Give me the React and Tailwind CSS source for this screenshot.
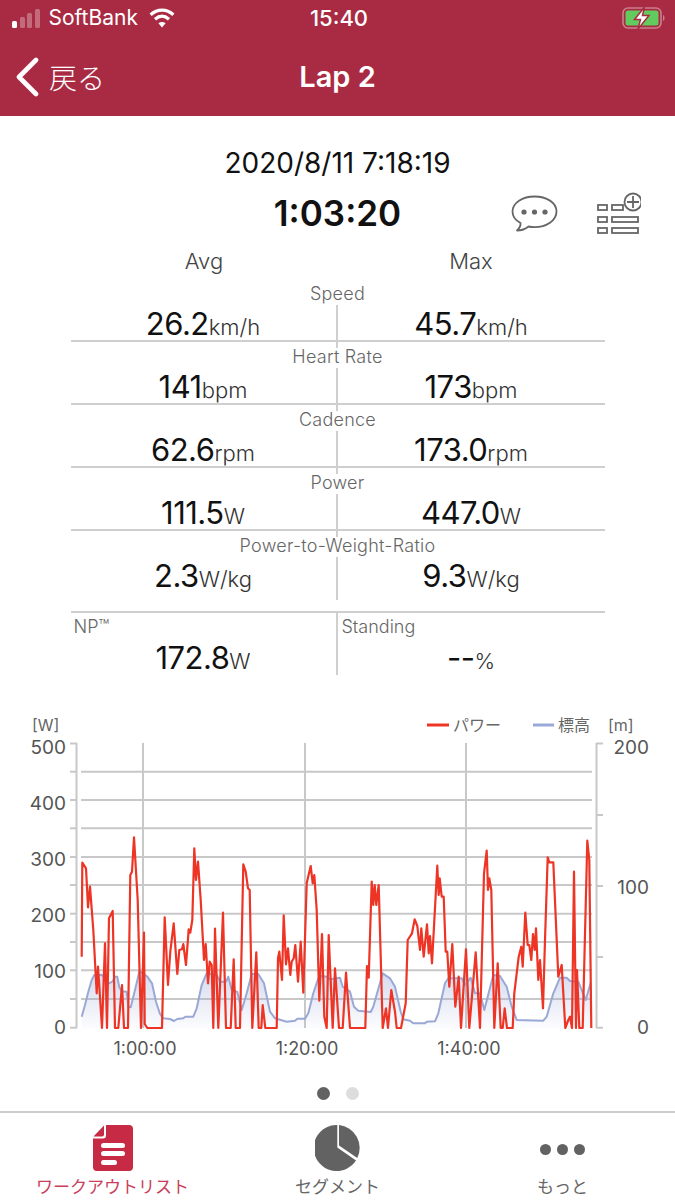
import React from 'react'

const CJK = '"Inter","Noto Sans CJK JP",sans-serif'

// traces are read off in 3x coordinates, left half starts at x=60, right half at x=330
const powerA = [[65,380],[67,98],[78,115],[84,232],[90,170],[100,300],[110,490],[114,410],[126,594],[135,340],[141,594],[147,265],[158,243],[165,594],[175,594],[186,465],[192,594],[204,594],[211,135],[216,125],[222,22],[233,210],[243,594],[252,308],[254,582],[262,594],[306,594],[314,262],[324,465],[331,365],[341,280],[352,432],[358,360],[366,358],[370,342],[378,405],[386,298],[391,308],[397,270],[403,55],[408,150],[414,95],[422,210],[432,390],[437,342],[444,460],[449,395],[455,405],[460,594],[465,296],[475,594],[489,248],[498,594],[512,594],[521,388],[527,594],[540,594],[550,103],[557,125],[564,175],[569,180],[577,594],[589,367],[596,594],[604,594],[608,525],[616,594],[650,594],[654,385],[658,365],[666,450],[671,256],[678,403],[684,355],[691,435],[695,395],[701,385],[706,345],[714,455],[722,335],[730,488],[740,160],[752,108],[758,160],[763,135],[770,240],[778,512],[786,312],[793,560],[800,594],[806,315],[818,594]]
const powerB = [[15,415],[27,594],[38,594],[48,428],[60,594],[106,594],[111,408],[116,443],[125,155],[130,225],[134,165],[139,225],[146,165],[158,594],[168,535],[174,594],[184,480],[195,545],[200,594],[213,594],[227,520],[233,330],[246,310],[254,268],[262,288],[270,360],[274,295],[281,380],[291,283],[296,370],[300,318],[306,400],[322,107],[326,195],[329,145],[335,200],[341,200],[347,365],[352,365],[358,470],[367,342],[376,530],[386,440],[393,594],[408,358],[418,594],[437,367],[450,594],[462,130],[470,62],[474,180],[478,145],[484,180],[493,594],[503,400],[512,594],[518,594],[524,535],[531,594],[548,594],[553,490],[566,380],[574,350],[578,410],[586,248],[593,345],[598,345],[604,390],[609,312],[614,360],[618,295],[625,450],[630,390],[639,535],[645,330],[653,82],[658,97],[670,97],[685,440],[695,405],[706,594],[715,570],[720,560],[726,594],[732,125],[738,594],[741,420],[748,594],[758,594],[772,32],[778,90],[784,594]]
const elevA = [[65,560],[75,525],[85,485],[95,450],[103,435],[125,434],[135,445],[147,460],[157,455],[165,440],[172,440],[178,472],[185,484],[200,485],[205,530],[212,532],[225,480],[238,425],[250,430],[262,440],[276,460],[288,515],[300,552],[310,565],[330,567],[342,573],[352,567],[370,565],[376,560],[400,560],[410,535],[425,465],[440,430],[470,435],[480,455],[498,455],[505,440],[515,480],[532,486],[545,540],[560,490],[575,432],[595,432],[612,460],[630,545],[645,565],[680,575],[705,572],[712,566],[735,566],[745,550],[760,490],[775,445],[785,438],[800,440]]
const elevB = [[0,448],[30,443],[38,470],[60,485],[72,530],[85,542],[122,546],[130,530],[158,430],[180,445],[195,470],[212,545],[220,568],[240,572],[250,580],[285,580],[290,575],[315,574],[325,550],[345,460],[355,445],[395,445],[405,465],[422,443],[435,490],[450,490],[463,540],[490,435],[510,438],[530,470],[545,530],[560,570],[640,572],[650,560],[670,490],[690,443],[710,443],[720,453],[745,455],[767,510],[782,458]]

const toPage = (pts, startX) => pts.map(([x, y]) => [+(startX + x / 3).toFixed(1), +(y / 3 + 130).toFixed(1)])
const power = [...toPage(powerA, 60), ...toPage(powerB, 330)]
const elev = [...toPage(elevA, 60), ...toPage(elevB, 330)]
const line = (pts) => pts.map((p) => p.join(',')).join(' ')

const rows = [
  { label: 'Speed', avg: '26.2', max: '45.7', unit: 'km/h' },
  { label: 'Heart Rate', avg: '141', max: '173', unit: 'bpm' },
  { label: 'Cadence', avg: '62.6', max: '173.0', unit: 'rpm' },
  { label: 'Power', avg: '111.5', max: '447.0', unit: 'W' },
]

function Value({ num, unit }) {
  return (
    <span className="text-[#111] whitespace-nowrap">
      <span className="text-[31px] tracking-[-0.5px]">{num}</span>
      <span className="text-[22px] font-light text-[#333]">{unit}</span>
    </span>
  )
}

function StatRow({ label, avg, max, unit, tall }) {
  return (
    <div className={`border-b-2 border-[#cfcfcf] ${tall ? 'h-[82px]' : 'h-[63px]'}`}>
      <div className="h-[26px] pt-[2px] leading-[26px] text-center text-[18px] tracking-[0.25px] font-light text-[#666]">{label}</div>
      <div className="grid grid-cols-2 h-[35px]">
        <div className="flex items-end justify-center border-r-2 border-[#cfcfcf] leading-[38px]">
          <Value num={avg} unit={unit} />
        </div>
        <div className="flex items-end justify-center leading-[38px]">
          <Value num={max} unit={unit} />
        </div>
      </div>
    </div>
  )
}

function StatusBar() {
  return (
    <div className="h-[36px] flex items-center justify-between pl-[12px] pr-[9px] text-white">
      <div className="flex items-center flex-1">
        <div className="flex items-end gap-[2.5px] h-[19px]">
          <span className="w-[5px] h-[7px] rounded-[1.5px] bg-white" />
          <span className="w-[5px] h-[11px] rounded-[1.5px] bg-white/30" />
          <span className="w-[5px] h-[15px] rounded-[1.5px] bg-white/30" />
          <span className="w-[5px] h-[19px] rounded-[1.5px] bg-white/30" />
        </div>
        <span className="ml-[9px] text-[21px]">SoftBank</span>
        <svg className="ml-[11px]" width="26" height="20" viewBox="0 0 26 20" fill="none" stroke="#fff" strokeWidth="3.2">
          <path d="M1.6 6.8C8.5 .6 17.5 .6 24.4 6.8" />
          <path d="M6 11.2c4.4-3.8 9.6-3.8 14 0" />
          <path d="M13 19.5l-3.6-4.2c2.2-1.6 5-1.6 7.2 0z" fill="#fff" stroke="none" />
        </svg>
      </div>
      <span className="text-[22px] font-medium">15:40</span>
      <div className="flex-1 flex justify-end">
        <svg width="44" height="22" viewBox="0 0 44 22">
          <rect x="1" y="1" width="38" height="20" rx="5" fill="none" stroke="#fff" strokeOpacity=".4" strokeWidth="1.6" />
          <rect x="3.5" y="3.5" width="33" height="15" rx="2.5" fill="#62cb5e" />
          <path d="M41 8c2 .5 2 5.500 0 6z" fill="#fff" fillOpacity=".4" />
          <path d="M22.500 0L12.500 12.500h6L16 22l11-13.500h-6.500z" fill="#fff" stroke="#a92b43" strokeWidth="1.500" />
        </svg>
      </div>
    </div>
  )
}

function NavBar() {
  return (
    <div className="h-[80px] grid grid-cols-[1fr_auto_1fr] items-center pt-[2px]">
      <div className="flex items-center pl-[16px] text-white">
        <svg width="23" height="40" viewBox="0 0 23 40" fill="none" stroke="#fff" strokeWidth="4.600" strokeLinecap="round" strokeLinejoin="round">
          <path d="M20 3L3 20l17 17" />
        </svg>
        <span className="ml-[10px] text-[28px] font-light leading-none" style={{ fontFamily: '"Noto Sans CJK JP",sans-serif' }}>戻る</span>
      </div>
      <span className="text-white text-[29px] font-semibold">Lap 2</span>
      <div />
    </div>
  )
}

function BubbleIcon() {
  return (
    <svg width="47" height="38" viewBox="0 0 47 38" fill="none">
      <path d="M23.500 1.500C11.500 1.500 1.500 8 1.500 16.500c0 5 3.300 9 8 11.500 .4 3-1.300 5.500-3.500 7.500 4.500 0 8.500-1.500 11.500-4 2 .4 4 .6 6 .6 12 0 22-6.600 22-15.600S35.500 1.500 23.500 1.500z" stroke="#666" strokeWidth="1.800" strokeLinejoin="round" />
      <circle cx="13" cy="17" r="2.600" fill="#666" />
      <circle cx="23.500" cy="17" r="2.600" fill="#666" />
      <circle cx="34" cy="17" r="2.600" fill="#666" />
    </svg>
  )
}

function ListPlusIcon() {
  return (
    <svg width="44" height="42" viewBox="0 0 44 42" fill="none" stroke="#666" strokeWidth="1.800">
      <rect x="1" y="13" width="9" height="5" />
      <rect x="15" y="13" width="11" height="5" />
      <rect x="1" y="25" width="9" height="5" />
      <rect x="15" y="25" width="26" height="5" />
      <rect x="1" y="36" width="9" height="5" />
      <rect x="15" y="36" width="26" height="5" />
      <circle cx="36" cy="10" r="8.500" fill="#fff" />
      <path d="M36 4v12M30 10h12" />
    </svg>
  )
}

function PowerChart() {
  const grid = '#c8c8c8'
  const axisText = { fill: '#555', fontSize: 19, fontFamily: CJK }
  const small = { fill: '#666', fontSize: 16, fontFamily: CJK }
  // svg y = page y - 700
  const hLines = [71.700, 100, 128.300, 157, 185, 213.700, 242, 270.300, 299]
  return (
    <svg width="675" height="375" viewBox="0 0 675 375" className="block">
      <defs>
        <linearGradient id="elevFill" x1="0" y1="0" x2="0" y2="1">
          <stop offset="0" stopColor="#9aa8d6" stopOpacity=".42" />
          <stop offset="1" stopColor="#9aa8d6" stopOpacity=".03" />
        </linearGradient>
      </defs>

      <text x="32" y="31" {...small}>[W]</text>
      <line x1="427" x2="449" y1="25" y2="25" stroke="#ee3424" strokeWidth="3" />
      <text x="453" y="31" {...small}>パワー</text>
      <line x1="533" x2="554" y1="25" y2="25" stroke="#9aa8d6" strokeWidth="3" />
      <text x="558" y="31" {...small}>標高</text>
      <text x="608" y="31" {...small}>[m]</text>

      {hLines.map((y) => <line key={y} x1="81" x2="592" y1={y} y2={y} stroke={grid} strokeWidth="2" />)}
      {[143, 305, 466].map((x) => <line key={x} x1={x} x2={x} y1="43" y2="328" stroke={grid} strokeWidth="2" />)}

      {/* left axis */}
      <line x1="76.500" x2="76.500" y1="43" y2="328" stroke={grid} strokeWidth="2" />
      {[43.500, 71.700, 100, 128.300, 157, 185, 213.700, 242, 270.300, 299, 327.700].map((y) => (
        <line key={y} x1="70" x2="77" y1={y} y2={y} stroke={grid} strokeWidth="2" />
      ))}
      {[['500', 47], ['400', 103], ['300', 159], ['200', 215], ['100', 271], ['0', 327]].map(([t, y]) => (
        <text key={t} x="66" y={y + 7} textAnchor="end" {...axisText}>{t}</text>
      ))}

      {/* right axis */}
      <line x1="596.500" x2="596.500" y1="43" y2="328" stroke={grid} strokeWidth="2" />
      {[43.500, 115, 186, 257, 327.700].map((y) => (
        <line key={y} x1="596" x2="603" y1={y} y2={y} stroke={grid} strokeWidth="2" />
      ))}
      {[['200', 47], ['100', 187], ['0', 327]].map(([t, y]) => (
        <text key={t} x="649" y={y + 7} textAnchor="end" {...axisText}>{t}</text>
      ))}

      <polygon points={`81.700,328 ${line(elev)} 591,328`} fill="url(#elevFill)" />
      <polyline points={line(elev)} fill="none" stroke="#9aa8d6" strokeWidth="2" strokeLinejoin="round" />
      <polyline points={line(power)} fill="none" stroke="#ee3424" strokeWidth="2.200" strokeLinejoin="round" />

      {[['1:00:00', 145], ['1:20:00', 307], ['1:40:00', 469]].map(([t, x]) => (
        <text key={t} x={x} y="355" textAnchor="middle" fill="#555" fontSize="18" fontFamily={CJK}>{t}</text>
      ))}
    </svg>
  )
}

function TabBar() {
  return (
    <div className="h-[88px] grid grid-cols-3 border-t-2 border-[#cccccc]">
      <div className="flex flex-col items-center pt-[12px]">
        <svg width="40" height="46" viewBox="0 0 40 46">
          <path d="M13 0h23a4 4 0 0 1 4 4v38a4 4 0 0 1-4 4H4a4 4 0 0 1-4-4V13.500h10a3 3 0 0 0 3-3z" fill="#c62a44" />
          <path d="M11 .5v9a2 2 0 0 1-2 2H.5z" fill="#c62a44" />
          <rect x="8" y="18" width="24" height="5" rx="2.500" fill="#fff" />
          <rect x="8" y="26" width="24" height="5" rx="2.500" fill="#fff" />
          <rect x="8" y="35" width="16" height="5" rx="2.500" fill="#fff" />
        </svg>
        <span className="mt-[3px] text-[17px] leading-[24px] text-[#c8405a]" style={{ fontFamily: '"Noto Sans CJK JP",sans-serif' }}>ワークアウトリスト</span>
      </div>
      <div className="flex flex-col items-center pt-[12px]">
        <svg width="46" height="46" viewBox="0 0 46 46">
          <path d="M22.300 0A23 23 0 1 0 41 35.500L22.300 22.500z" fill="#626262" />
          <path d="M24 0A23 23 0 0 1 42.300 33L24 20.500z" fill="#626262" />
        </svg>
        <span className="mt-[3px] text-[17px] leading-[24px] text-[#666]" style={{ fontFamily: '"Noto Sans CJK JP",sans-serif' }}>セグメント</span>
      </div>
      <div className="flex flex-col items-center pt-[12px]">
        <div className="h-[46px] flex items-center gap-[6px] pt-[2px]">
          <span className="w-[11px] h-[11px] rounded-full bg-[#626262]" />
          <span className="w-[11px] h-[11px] rounded-full bg-[#626262]" />
          <span className="w-[11px] h-[11px] rounded-full bg-[#626262]" />
        </div>
        <span className="mt-[3px] text-[17px] leading-[24px] text-[#666]" style={{ fontFamily: '"Noto Sans CJK JP",sans-serif' }}>もっと</span>
      </div>
    </div>
  )
}

export default function App() {
  return (
    <div className="w-[675px] h-[1200px] bg-white overflow-hidden flex flex-col" style={{ fontFamily: CJK }}>
      <header className="h-[116px] bg-[#a92b43]">
        <StatusBar />
        <NavBar />
      </header>

      <div className="h-[32px] mt-[31px] leading-[32px] text-center text-[28px] text-[#111]">2020/8/11 7:18:19</div>

      <div className="h-[46px] mt-[8px] grid grid-cols-[1fr_auto_1fr] items-center">
        <div />
        <span className="text-[35px] font-semibold text-[#111]">1:03:20</span>
        <div className="flex items-start pl-[110px] gap-[40px]">
          <div className="mt-[2px]"><BubbleIcon /></div>
          <div className="-mt-[1px] -ml-[1px]"><ListPlusIcon /></div>
        </div>
      </div>

      <div className="grid grid-cols-2 w-[534px] mx-auto h-[36px] mt-[10px] leading-[36px] text-center text-[22px] font-light text-[#444]">
        <span>Avg</span>
        <span>Max</span>
      </div>

      <div className="w-[534px] mx-auto">
        {rows.map((r) => <StatRow key={r.label} {...r} />)}
        <StatRow label="Power-to-Weight-Ratio" avg="2.3" max="9.3" unit="W/kg" tall />
        <div className="grid grid-cols-2 h-[62px]">
          <div className="border-r-2 border-[#cfcfcf] h-[62px] flex flex-col">
            <span className="pl-[3px] text-[18px] font-light leading-[28px] text-[#666]">NP™</span>
            <div className="text-center leading-[34px]"><Value num="172.8" unit="W" /></div>
          </div>
          <div className="flex flex-col">
            <span className="pl-[4px] text-[18px] font-light leading-[28px] text-[#666]">Standing</span>
            <div className="text-center leading-[34px]"><Value num="--" unit="%" /></div>
          </div>
        </div>
      </div>

      <div className="mt-[25px]">
        <PowerChart />
      </div>

      <div className="flex justify-center gap-[16px] h-[36px] pt-[12px]">
        <span className="w-[13px] h-[13px] rounded-full bg-[#626262]" />
        <span className="w-[13px] h-[13px] rounded-full bg-[#dddddd]" />
      </div>

      <TabBar />
    </div>
  )
}
